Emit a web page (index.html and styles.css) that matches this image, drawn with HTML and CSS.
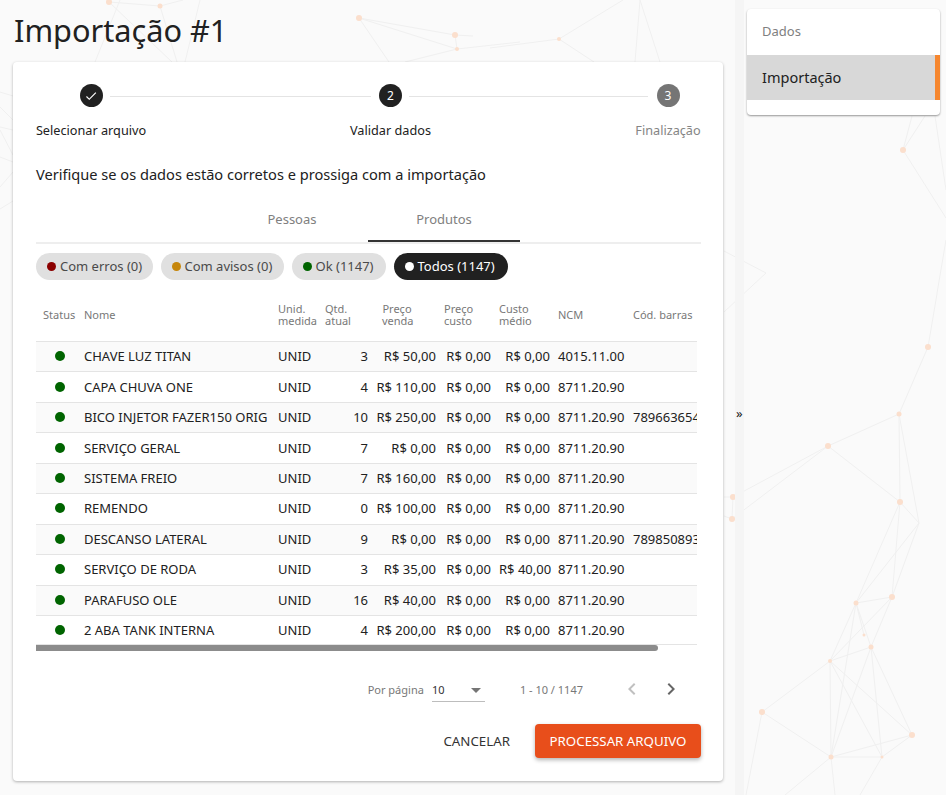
FILE: index.html
```html
<!DOCTYPE html>
<html lang="pt-BR">
<head>
    <meta charset="UTF-8">
    <meta name="viewport" content="width=device-width, initial-scale=1.0">
    <title>Importação #1</title>
    <link rel="stylesheet" href="styles.css">
</head>
<body>
    <!-- Fundo decorativo -->
    <svg class="network" viewBox="0 0 946 795" aria-hidden="true">
        <g class="edges">
            <path d="M0 92L13 96M0 107L13 120M0 127L13 130M0 130L13 155M0 157L13 162M0 187L13 172M0 209L13 201"/>
            <path d="M109 2L160 6M109 2L172 62M160 6L177 62M200 0L185 62M120 0L95 62M160 6L183 0"/>
            <path d="M359 18L455 35M359 18L389 62M359 18L457 49M455 35L457 49M457 49L405 62M455 35L473 36M457 49L520 42"/>
            <path d="M559 39L623 0M559 39L490 48M559 39L594 62M640 0L635 62M640 0L660 62"/>
            <path d="M903 150L912 116M903 150L925 116M903 150L946 218M935 116L946 190M928 347L946 240M928 347L899 414M724 251L766 273M766 273L724 312"/>
            <path d="M899 414L828 446M828 446L733 497M828 446L900 502M733 497L732 519M733 497L724 497M732 519L724 516M828 446L732 519M899 414L900 502M899 414L919 523M900 502L919 523"/>
            <path d="M900 502L856 603M900 502L892 597M919 523L856 603M919 523L892 597M856 603L892 597M856 603L871 647M856 603L830 661M892 597L871 647M892 597L830 661M864 635L856 603M871 647L830 661"/>
            <path d="M830 661L762 712M830 661L831 757M830 661L882 757M830 661L912 735M871 647L912 735M871 647L882 757M871 647L831 757M762 712L831 757M762 712L746 795M912 735L831 757M912 735L882 757M831 757L882 757M831 757L785 795M831 757L835 795M882 757L860 795M856 603L831 757"/>
        </g>
        <g class="nodes">
            <circle cx="109" cy="2" r="3"/><circle cx="160" cy="6" r="2.5"/><circle cx="359" cy="18" r="3"/>
            <circle cx="455" cy="35" r="3"/><circle cx="457" cy="49" r="2"/><circle cx="559" cy="39" r="2"/>
            <circle cx="903" cy="150" r="3"/><circle cx="928" cy="347" r="3"/><circle cx="899" cy="414" r="2.5"/>
            <circle cx="828" cy="446" r="3"/><circle cx="733" cy="497" r="3"/><circle cx="732" cy="519" r="3"/>
            <circle cx="900" cy="502" r="3"/><circle cx="856" cy="603" r="2.5"/><circle cx="892" cy="597" r="3"/>
            <circle cx="864" cy="635" r="1.5"/><circle cx="871" cy="647" r="2.5"/><circle cx="830" cy="661" r="2"/>
            <circle cx="762" cy="712" r="3"/><circle cx="912" cy="735" r="3"/><circle cx="831" cy="757" r="2.5"/>
            <circle cx="882" cy="757" r="1.5"/>
        </g>
    </svg>

    <div class="page">
        <main class="content">
            <h1 class="page-title">Importação #1</h1>

            <section class="card">
                <div class="stepper">
                    <div class="step step-first">
                        <span class="step-circle">
                            <svg viewBox="0 0 24 24" class="step-check"><path d="M21,7L9,19L3.5,13.5L4.91,12.09L9,16.17L19.59,5.59L21,7Z"/></svg>
                        </span>
                        <span class="step-label">Selecionar arquivo</span>
                    </div>
                    <div class="step-line line-a"></div>
                    <div class="step step-second">
                        <span class="step-circle">2</span>
                        <span class="step-label">Validar dados</span>
                    </div>
                    <div class="step-line line-b"></div>
                    <div class="step step-third is-pending">
                        <span class="step-circle">3</span>
                        <span class="step-label">Finalização</span>
                    </div>
                </div>

                <p class="intro">Verifique se os dados estão corretos e prossiga com a importação</p>

                <div class="tabs">
                    <div class="tab">Pessoas</div>
                    <div class="tab tab-active">Produtos</div>
                </div>

                <div class="chips">
                    <span class="chip"><i class="dot dot-error"></i>Com erros (0)</span>
                    <span class="chip"><i class="dot dot-warn"></i>Com avisos (0)</span>
                    <span class="chip"><i class="dot dot-ok"></i>Ok (1147)</span>
                    <span class="chip chip-active"><i class="dot dot-all"></i>Todos (1147)</span>
                </div>

                <div class="table-wrap">
                    <table class="data-table">
                        <colgroup>
                            <col class="col-status"><col class="col-name"><col class="col-unit"><col class="col-qty">
                            <col class="col-sale"><col class="col-cost"><col class="col-avg"><col class="col-ncm"><col class="col-bar">
                        </colgroup>
                        <thead>
                            <tr>
                                <th class="th-status">Status</th>
                                <th>Nome</th>
                                <th>Unid.<br>medida</th>
                                <th class="th-qty">Qtd.<br>atual</th>
                                <th class="th-sale">Preço<br>venda</th>
                                <th>Preço<br>custo</th>
                                <th>Custo<br>médio</th>
                                <th>NCM</th>
                                <th>Cód. barras</th>
                            </tr>
                        </thead>
                        <tbody>
                            <tr><td><i class="dot dot-ok"></i></td><td>CHAVE LUZ TITAN</td><td>UNID</td><td class="num">3</td><td class="num">R$ 50,00</td><td class="num">R$ 0,00</td><td class="num">R$ 0,00</td><td>4015.11.00</td><td></td></tr>
                            <tr><td><i class="dot dot-ok"></i></td><td>CAPA CHUVA ONE</td><td>UNID</td><td class="num">4</td><td class="num">R$ 110,00</td><td class="num">R$ 0,00</td><td class="num">R$ 0,00</td><td>8711.20.90</td><td></td></tr>
                            <tr><td><i class="dot dot-ok"></i></td><td>BICO INJETOR FAZER150 ORIG</td><td>UNID</td><td class="num">10</td><td class="num">R$ 250,00</td><td class="num">R$ 0,00</td><td class="num">R$ 0,00</td><td>8711.20.90</td><td>789663654</td></tr>
                            <tr><td><i class="dot dot-ok"></i></td><td>SERVIÇO GERAL</td><td>UNID</td><td class="num">7</td><td class="num">R$ 0,00</td><td class="num">R$ 0,00</td><td class="num">R$ 0,00</td><td>8711.20.90</td><td></td></tr>
                            <tr><td><i class="dot dot-ok"></i></td><td>SISTEMA FREIO</td><td>UNID</td><td class="num">7</td><td class="num">R$ 160,00</td><td class="num">R$ 0,00</td><td class="num">R$ 0,00</td><td>8711.20.90</td><td></td></tr>
                            <tr><td><i class="dot dot-ok"></i></td><td>REMENDO</td><td>UNID</td><td class="num">0</td><td class="num">R$ 100,00</td><td class="num">R$ 0,00</td><td class="num">R$ 0,00</td><td>8711.20.90</td><td></td></tr>
                            <tr><td><i class="dot dot-ok"></i></td><td>DESCANSO LATERAL</td><td>UNID</td><td class="num">9</td><td class="num">R$ 0,00</td><td class="num">R$ 0,00</td><td class="num">R$ 0,00</td><td>8711.20.90</td><td>789850893</td></tr>
                            <tr><td><i class="dot dot-ok"></i></td><td>SERVIÇO DE RODA</td><td>UNID</td><td class="num">3</td><td class="num">R$ 35,00</td><td class="num">R$ 0,00</td><td class="num">R$ 40,00</td><td>8711.20.90</td><td></td></tr>
                            <tr><td><i class="dot dot-ok"></i></td><td>PARAFUSO OLE</td><td>UNID</td><td class="num">16</td><td class="num">R$ 40,00</td><td class="num">R$ 0,00</td><td class="num">R$ 0,00</td><td>8711.20.90</td><td></td></tr>
                            <tr><td><i class="dot dot-ok"></i></td><td>2 ABA TANK INTERNA</td><td>UNID</td><td class="num">4</td><td class="num">R$ 200,00</td><td class="num">R$ 0,00</td><td class="num">R$ 0,00</td><td>8711.20.90</td><td></td></tr>
                        </tbody>
                    </table>
                </div>
                <div class="scrollbar"><div class="scrollbar-thumb"></div></div>

                <div class="pager">
                    <span class="pager-label">Por página</span>
                    <div class="pager-select">
                        <span>10</span>
                        <svg viewBox="0 0 24 24" class="pager-arrow"><path d="M7,10L12,15L17,10H7Z"/></svg>
                    </div>
                    <span class="pager-range">1 - 10 / 1147</span>
                    <svg viewBox="0 0 24 24" class="pager-btn is-disabled"><path d="M15.41,16.58L10.83,12L15.41,7.41L14,6L8,12L14,18L15.41,16.58Z"/></svg>
                    <svg viewBox="0 0 24 24" class="pager-btn"><path d="M8.59,16.58L13.17,12L8.59,7.41L10,6L16,12L10,18L8.59,16.58Z"/></svg>
                </div>

                <div class="actions">
                    <button class="btn btn-text" type="button">CANCELAR</button>
                    <button class="btn btn-primary" type="button">PROCESSAR ARQUIVO</button>
                </div>
            </section>
        </main>

        <div class="side-toggle">
            <span class="side-toggle-strip"></span>
            <span class="side-toggle-icon">»</span>
        </div>

        <aside class="sidebar">
            <nav class="side-menu">
                <a class="side-item">Dados</a>
                <a class="side-item side-item-active">Importação</a>
            </nav>
        </aside>
    </div>
</body>
</html>
```

FILE: styles.css
```css
* {
    box-sizing: border-box;
}
body {
    margin: 0;
    height: 795px;
    overflow: hidden;
    position: relative;
    background-color: #fafafa;
    color: #212121;
    font-family: "Noto Sans", "Open Sans", sans-serif;
    font-size: 13px;
}

/* Fundo decorativo */
.network {
    position: absolute;
    top: 0;
    left: 0;
    width: 946px;
    height: 795px;
}
.edges path {
    fill: none;
    stroke: #f0f0f0;
    stroke-width: 1;
}
.nodes circle {
    fill: #fbdfcd;
}

.page {
    position: relative;
    display: flex;
    height: 795px;
}
.content {
    width: 723px;
    padding-left: 13px;
    flex: none;
}
.page-title {
    margin: 0;
    height: 62px;
    padding: 10px 0 0 1px;
    font-size: 30.7px;
    font-weight: 400;
    line-height: 40px;
}

.card {
    width: 710px;
    height: 719px;
    padding: 22px 22px 0 23px;
    background-color: #fff;
    border-radius: 4px;
    box-shadow: 0 1px 3px rgba(0, 0, 0, 0.3);
}

/* Stepper */
.stepper {
    display: flex;
    height: 65px;
}
.step {
    flex: none;
    display: flex;
    flex-direction: column;
    align-items: center;
    white-space: nowrap;
}
.step-first { width: 110px; }
.step-second { width: 81px; }
.step-third { width: 66px; }
.step-circle {
    width: 23px;
    height: 23px;
    border-radius: 50%;
    background-color: #212121;
    color: #fff;
    font-size: 12px;
    display: flex;
    align-items: center;
    justify-content: center;
}
.step-check {
    width: 14px;
    height: 14px;
    fill: #fff;
}
.step-label {
    margin-top: 14px;
    font-size: 12.7px;
    line-height: 18px;
}
.is-pending .step-circle {
    background-color: #757575;
}
.is-pending .step-label {
    color: #858585;
}
.step-line {
    flex: none;
    height: 1px;
    margin-top: 12px;
    background-color: #e4e4e4;
}
.line-a { width: 261px; margin-left: -36px; margin-right: -21px; }
.line-b { width: 239px; margin-left: -22px; margin-right: -13px; }

.intro {
    margin: 15px 0 0;
    font-size: 14.6px;
    line-height: 20px;
}

/* Abas */
.tabs {
    display: flex;
    justify-content: center;
    height: 48px;
    margin-top: 12px;
    padding-right: 1px;
    border-bottom: 2px solid #eee;
}
.tab {
    width: 152px;
    height: 46px;
    padding-top: 14px;
    text-align: center;
    color: #808080;
    line-height: 18px;
}
.tab-active {
    border-bottom: 2px solid #333;
}

/* Filtros */
.chips {
    display: grid;
    grid-template-columns: 116.5px 123px 94px 114px;
    gap: 8px;
    margin-top: 9px;
}
.chip {
    display: flex;
    align-items: center;
    height: 27px;
    padding: 0 0 1px 11px;
    border-radius: 14px;
    background-color: #e0e0e0;
    color: #4a4a4a;
    white-space: nowrap;
}
.chip .dot {
    width: 9px;
    height: 9px;
    margin-right: 4px;
}
.chip-active {
    background-color: #212121;
    color: #fff;
}
.dot {
    display: inline-block;
    width: 10px;
    height: 10px;
    border-radius: 50%;
}
.dot-error { background-color: #8b0000; }
.dot-warn { background-color: #c6860b; }
.dot-ok { background-color: #006400; }
.dot-all { background-color: #fff; }

/* Tabela */
.table-wrap {
    width: 661px;
    margin-top: 10px;
    overflow: hidden;
}
.data-table {
    width: 720px;
    table-layout: fixed;
    border-collapse: separate;
    border-spacing: 0;
}
.col-status { width: 44px; }
.col-name { width: 194px; }
.col-unit { width: 44px; }
.col-qty { width: 54px; }
.col-sale { width: 68px; }
.col-cost { width: 55px; }
.col-avg { width: 59px; }
.col-ncm { width: 75px; }
.col-bar { width: 127px; }
.data-table th {
    height: 51px;
    padding: 0 4px 2px;
    text-align: left;
    font-size: 11px;
    font-weight: 400;
    line-height: 12px;
    color: #787878;
    white-space: nowrap;
}
.data-table .th-status { padding-left: 7px; padding-right: 0; }
.data-table .th-qty { padding-left: 7px; text-align: center; padding-right: 28px; }
.data-table .th-sale { padding-left: 10px; text-align: center; padding-right: 28px; }
.data-table td {
    height: 30.45px;
    padding: 0 4px 1px;
    border-top: 1px solid #e4e4e4;
    white-space: nowrap;
    overflow: hidden;
}
.data-table td:first-child {
    text-align: center;
    padding-left: 8px;
    line-height: 0;
}
.data-table tbody tr:nth-child(odd) {
    background-color: #fafafa;
}
.data-table tbody tr:last-child td {
    border-bottom: 1px solid #e4e4e4;
}
.data-table .num {
    text-align: right;
}

.scrollbar {
    width: 661px;
    height: 6px;
}
.scrollbar-thumb {
    width: 622px;
    height: 6px;
    background-color: #8c8c8c;
    border-radius: 0 3px 3px 0;
}

/* Paginação */
.pager {
    display: flex;
    align-items: center;
    justify-content: flex-end;
    height: 30px;
    margin-top: 23px;
    padding-right: 18px;
    font-size: 11px;
    color: #787878;
}
.pager-select {
    display: flex;
    align-items: center;
    justify-content: space-between;
    width: 53px;
    height: 26px;
    margin-left: 8px;
    padding-top: 2px;
    border-bottom: 1px solid #bdbdbd;
    color: #333;
}
.pager-arrow {
    width: 24px;
    height: 24px;
    margin-right: -3px;
    fill: #757575;
}
.pager-range {
    margin-left: 35px;
    margin-right: 37px;
}
.pager-btn {
    width: 24px;
    height: 24px;
    fill: #666;
}
.pager-btn.is-disabled {
    fill: #c0c0c0;
    margin-right: 15px;
}

/* Ações */
.actions {
    display: flex;
    justify-content: flex-end;
    align-items: center;
    gap: 9px;
    margin-top: 20px;
}
.btn {
    height: 34px;
    border: none;
    border-radius: 4px;
    font-family: inherit;
    font-size: 13.3px;
    cursor: pointer;
}
.btn-text {
    padding: 0 16px;
    background: none;
    color: #333;
}
.btn-primary {
    width: 166px;
    padding: 0;
    background-color: #e84e1b;
    color: #fff;
    box-shadow: 0 2px 4px rgba(0, 0, 0, 0.3);
}

/* Barra lateral */
.side-toggle {
    position: relative;
    width: 24px;
    flex: none;
}
.side-toggle-strip {
    position: absolute;
    top: 0;
    bottom: 0;
    left: 12px;
    width: 9px;
    background-color: #f5f5f5;
}
.side-toggle-icon {
    position: absolute;
    top: 404px;
    left: 13px;
    font-size: 13px;
    line-height: 18px;
    color: #212121;
}
.sidebar {
    width: 193px;
    flex: none;
    padding-top: 9px;
}
.side-menu {
    display: block;
    height: 106px;
    background-color: #fff;
    border-radius: 4px;
    box-shadow: 0 1px 2px rgba(0, 0, 0, 0.4);
}
.side-item {
    display: block;
    height: 45.5px;
    padding: 0 15px;
    line-height: 45px;
    color: #808080;
}
.side-item-active {
    background-color: #d8d8d8;
    border-right: 5px solid #f6872f;
    color: #212121;
    font-size: 14.5px;
}
```
